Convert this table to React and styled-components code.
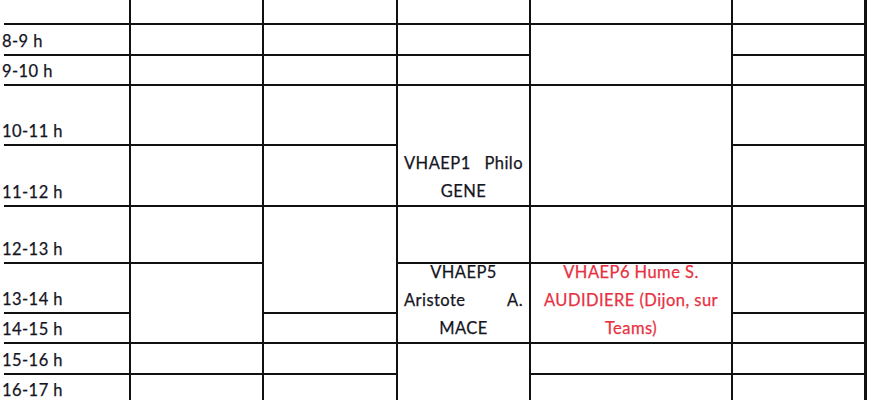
import React from "react";
import styled, { createGlobalStyle } from "styled-components";

const GlobalStyle = createGlobalStyle`
  html, body {
    margin: 0;
    padding: 0;
    background: #fff;
  }
  body {
    font-family: Lato, "Open Sans", sans-serif;
  }
`;

const Page = styled.div`
  width: 870px;
  height: 400px;
  overflow: hidden;
  background: #fff;
  padding-left: 4px;
  box-sizing: border-box;
`;

const Timetable = styled.div`
  display: inline-grid;
  grid-template-columns: 125px 131px 132px 131px 200px 131px;
  grid-template-rows: 23px 29px 28px 58px 59px 55px 48px 28px 29px 28px;
  gap: 2px;
  padding-right: 3px;
  background: #111;
`;

const Cell = styled.div`
  grid-column: ${(p) => p.$col};
  grid-row: ${(p) => p.$row} / span ${(p) => p.$span || 1};
  background: #fff;
  display: flex;
  flex-direction: column;
  justify-content: flex-end;
  font-size: 16.5px;
  letter-spacing: 0.45px;
  -webkit-text-stroke: 0.25px currentColor;
  color: ${(p) => (p.$red ? "#e8303f" : "#15151f")};
`;

const TimeLabel = styled.div`
  line-height: 26px;
  margin-left: -2px;
  white-space: nowrap;
`;

const Line = styled.div`
  display: flex;
  justify-content: ${(p) => (p.$justify ? "space-between" : "center")};
  line-height: 28px;
  padding: 0 6px;
  white-space: nowrap;
`;

const hours = [
  "8-9 h",
  "9-10 h",
  "10-11 h",
  "11-12 h",
  "12-13 h",
  "13-14 h",
  "14-15 h",
  "15-16 h",
  "16-17 h",
];

// [column, first row, rows spanned, lines, red]
const slots = [
  // col 2
  ...[1, 2, 3, 4, 5, 6].map((r) => [2, r, 1]),
  [2, 7, 2],
  [2, 9, 1],
  [2, 10, 1],
  // col 3
  ...[1, 2, 3, 4, 5].map((r) => [3, r, 1]),
  [3, 6, 2],
  [3, 8, 1],
  [3, 9, 1],
  [3, 10, 1],
  // col 4
  [4, 1, 1],
  [4, 2, 1],
  [4, 3, 1],
  [4, 4, 2, [["VHAEP1", "Philo"], ["GENE"]]],
  [4, 6, 1],
  [4, 7, 2, [["VHAEP5"], ["Aristote", "A."], ["MACE"]]],
  [4, 9, 2],
  // col 5
  [5, 1, 1],
  [5, 2, 2],
  [5, 4, 2],
  [5, 6, 1],
  [5, 7, 2, [["VHAEP6 Hume S."], ["AUDIDIERE (Dijon, sur"], ["Teams)"]], true],
  [5, 9, 1],
  [5, 10, 1],
  // col 6
  ...[1, 2, 3, 4, 5, 6, 7, 8, 9, 10].map((r) => [6, r, 1]),
];

export default function App() {
  return (
    <Page>
      <GlobalStyle />
      <Timetable>
        <Cell $col={1} $row={1} />
        {hours.map((h, i) => (
          <Cell key={h} $col={1} $row={i + 2}>
            <TimeLabel>{h}</TimeLabel>
          </Cell>
        ))}
        {slots.map(([col, row, span, lines, red]) => (
          <Cell key={`${col}-${row}`} $col={col} $row={row} $span={span} $red={red}>
            {lines &&
              lines.map((words, i) => (
                <Line key={i} $justify={words.length > 1}>
                  {words.map((w) => (
                    <span key={w}>{w}</span>
                  ))}
                </Line>
              ))}
          </Cell>
        ))}
      </Timetable>
    </Page>
  );
}
